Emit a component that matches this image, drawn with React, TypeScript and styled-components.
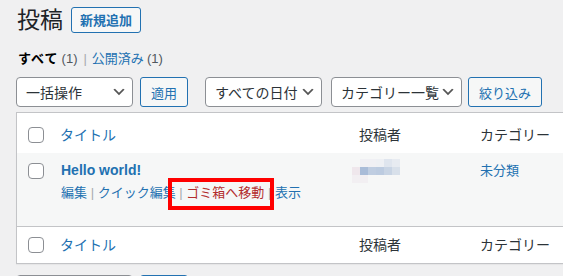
import React from "react";
import styled, { createGlobalStyle } from "styled-components";

const GlobalStyle = createGlobalStyle`
  html, body {
    margin: 0;
    padding: 0;
    background: #f0f0f1;
    overflow: hidden;
  }
  body {
    font-family: "Liberation Sans", "Noto Sans CJK JP", sans-serif;
    color: #1d2327;
    font-size: 13px;
  }
`;

const Wrap = styled.div`
  width: 563px;
  height: 276px;
  overflow: hidden;
  padding-left: 16px;
  box-sizing: border-box;
`;

const Heading = styled.div`
  display: flex;
  align-items: center;
  height: 39px;
`;

const Title = styled.h1`
  margin: 0 0 0 1px;
  font-size: 23px;
  font-weight: 400;
  line-height: 30px;
  color: #1d2327;
`;

const Button = styled.a<{ $ml?: number; $bold?: boolean; $h?: number; $px?: number }>`
  display: inline-flex;
  align-items: center;
  box-sizing: border-box;
  height: ${(p) => p.$h ?? 30}px;
  margin-left: ${(p) => p.$ml ?? 0}px;
  padding: 0 ${(p) => p.$px ?? 10}px;
  border: 1px solid #2271b1;
  border-radius: 3px;
  background: #f6f7f7;
  color: #2271b1;
  font-size: 13px;
  font-weight: ${(p) => (p.$bold ? 600 : 400)};
  white-space: nowrap;
  text-decoration: none;
`;

const Filters = styled.div`
  display: flex;
  align-items: center;
  height: 20px;
  margin-top: 10px;
  padding-left: 2px;
  font-size: 13px;
  line-height: 20px;
`;

const Current = styled.span`
  font-weight: 700;
  letter-spacing: 1px;
  color: #000;
`;

const Count = styled.span`
  margin-left: 3px;
  color: #50575e;
`;

const Sep = styled.span`
  margin: 0 5px 0 6px;
  color: #a7aaad;
`;

const Link = styled.a`
  color: #2271b1;
  text-decoration: none;
`;

const Toolbar = styled.div<{ $mt: number }>`
  display: flex;
  align-items: center;
  height: 30px;
  margin-top: ${(p) => p.$mt}px;
`;

const Select = styled.div<{ $w: number; $ml?: number }>`
  display: flex;
  align-items: center;
  justify-content: space-between;
  box-sizing: border-box;
  width: ${(p) => p.$w}px;
  height: 30px;
  margin-left: ${(p) => p.$ml ?? 0}px;
  padding: 0 5px 0 9px;
  border: 1px solid #8c8f94;
  border-radius: 4px;
  background: #fff;
  color: #2c3338;
  font-size: 14px;
  white-space: nowrap;

  svg {
    flex: none;
  }
`;

const Table = styled.div`
  width: 620px;
  margin-top: 5px;
  border: 1px solid #c3c4c7;
  background: #fff;
  box-shadow: 0 1px 1px rgba(0, 0, 0, 0.04);
`;

const Row = styled.div<{ $kind: "head" | "body" | "foot" }>`
  display: grid;
  grid-template-columns: 35px 299px 121px 1fr;
  align-items: ${(p) => (p.$kind === "body" ? "start" : "center")};
  height: ${(p) => (p.$kind === "head" ? 39 : p.$kind === "body" ? 73 : 36)}px;
  box-sizing: content-box;
  padding-top: ${(p) => (p.$kind === "head" ? 2 : 0)}px;
  margin-bottom: ${(p) => (p.$kind === "head" ? -2 : 0)}px;
  background: ${(p) => (p.$kind === "body" ? "#f6f7f7" : "#fff")};
  border-bottom: ${(p) => (p.$kind === "head" ? "1px solid #c3c4c7" : "none")};
  border-top: ${(p) => (p.$kind === "foot" ? "1px solid #c3c4c7" : "none")};
`;

const Check = styled.span<{ $mt?: number }>`
  display: block;
  box-sizing: border-box;
  width: 16px;
  height: 16px;
  margin-left: 11px;
  margin-top: ${(p) => p.$mt ?? 0}px;
  border: 1px solid #8c8f94;
  border-radius: 4px;
  background: #fff;
`;

const HeadCell = styled.div<{ $link?: boolean }>`
  padding-left: 8px;
  font-size: 14px;
  line-height: 20px;
  color: ${(p) => (p.$link ? "#2271b1" : "#2c3338")};
  white-space: nowrap;
`;

const TitleCell = styled.div`
  padding: 7px 0 0 9px;
`;

const PostTitle = styled.a`
  display: block;
  font-size: 14px;
  font-weight: 700;
  line-height: 20px;
  color: #2271b1;
  text-decoration: none;
`;

const RowActions = styled.div`
  margin-top: 3px;
  font-size: 13px;
  line-height: 20px;
  white-space: nowrap;
  color: #a7aaad;
`;

const Action = styled.a<{ $danger?: boolean }>`
  color: ${(p) => (p.$danger ? "#b32d2e" : "#2271b1")};
  text-decoration: none;
`;

const Marked = styled.span`
  position: relative;

  &::after {
    content: "";
    position: absolute;
    left: -18px;
    right: -10px;
    top: -7px;
    bottom: -10px;
    border: 4px solid #ff0000;
  }
`;

const AuthorCell = styled.div`
  padding: 6px 0 0 1px;

  svg {
    display: block;
  }
`;

const CatCell = styled.div`
  padding: 7px 0 0 8px;
  font-size: 14px;
  line-height: 20px;

  a {
    color: #2271b1;
    text-decoration: none;
    font-size: 13px;
  }
`;

const Chevron = () => (
  <svg width="16" height="16" viewBox="0 0 20 20">
    <path d="M5 6l5 5 5-5 2 1-7 7-7-7 2-1z" fill="#555" />
  </svg>
);

const mosaic: string[][] = [
  ["#f6f7f7", "#f0f0f4", "#f0f0f4", "#eef0f4", "#dfe5ee", "#e7ebf1"],
  ["#efe7ec", "#a9bcd8", "#bfcde1", "#bccbe0", "#c8d4e4", "#d8e0ea"],
  ["#f2eff2", "#f2eff2", "#f6f7f7", "#f6f7f7", "#f6f7f7", "#f6f7f7"],
];

const BlurredName = () => (
  <svg width="48" height="24" viewBox="0 0 48 24">
    {mosaic.map((row, y) =>
      row.map((c, x) => <rect key={`${x}-${y}`} x={x * 8} y={y * 8} width="8" height="8" fill={c} />)
    )}
  </svg>
);

const BulkBar = ({ mt }: { mt: number }) => (
  <Toolbar $mt={mt}>
    <Select $w={117}>
      一括操作
      <Chevron />
    </Select>
    <Button $ml={7}>適用</Button>
  </Toolbar>
);

export default function App() {
  return (
    <>
      <GlobalStyle />
      <Wrap>
        <Heading>
          <Title>投稿</Title>
          <Button $ml={8} $bold $h={26} $px={8}>
            新規追加
          </Button>
        </Heading>

        <Filters>
          <Current>すべて</Current>
          <Count>(1)</Count>
          <Sep>|</Sep>
          <Link>公開済み</Link>
          <Count>(1)</Count>
        </Filters>

        <Toolbar $mt={8}>
          <Select $w={117}>
            一括操作
            <Chevron />
          </Select>
          <Button $ml={7}>適用</Button>
          <Select $w={117} $ml={17}>
            すべての日付
            <Chevron />
          </Select>
          <Select $w={131} $ml={9}>
            カテゴリー一覧
            <Chevron />
          </Select>
          <Button $ml={6}>絞り込み</Button>
        </Toolbar>

        <Table>
          <Row $kind="head">
            <Check />
            <HeadCell $link>タイトル</HeadCell>
            <HeadCell>投稿者</HeadCell>
            <HeadCell>カテゴリー</HeadCell>
          </Row>
          <Row $kind="body">
            <Check $mt={10} />
            <TitleCell>
              <PostTitle>Hello world!</PostTitle>
              <RowActions>
                <Action>編集</Action> | <Action>クイック編集</Action> |{" "}
                <Marked>
                  <Action $danger>ゴミ箱へ移動</Action>
                </Marked>{" "}
                | <Action>表示</Action>
              </RowActions>
            </TitleCell>
            <AuthorCell>
              <BlurredName />
            </AuthorCell>
            <CatCell>
              <a>未分類</a>
            </CatCell>
          </Row>
          <Row $kind="foot">
            <Check />
            <HeadCell $link>タイトル</HeadCell>
            <HeadCell>投稿者</HeadCell>
            <HeadCell>カテゴリー</HeadCell>
          </Row>
        </Table>

        <BulkBar mt={11} />
      </Wrap>
    </>
  );
}
